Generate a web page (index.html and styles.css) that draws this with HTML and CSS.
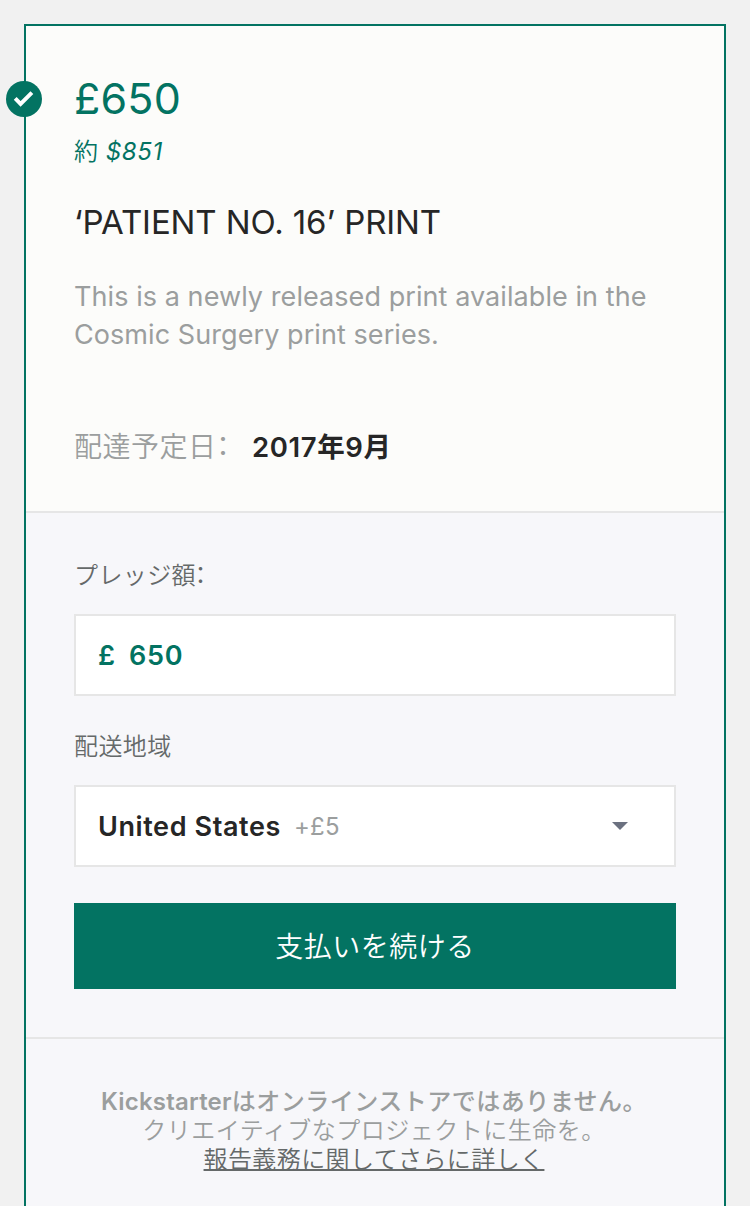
FILE: index.html
```html
<!DOCTYPE html>
<html lang="ja">
<head>
<meta charset="utf-8">
<title>Pledge</title>
<link rel="stylesheet" href="styles.css">
</head>
<body>
<main class="reward">
  <svg class="check" viewBox="0 0 36 36"><circle cx="18" cy="18" r="18"/><path d="M9.2 17.4l5.4 5.5L25.9 11.7"/></svg>
  <section class="summary">
    <h1 class="price">£650</h1>
    <p class="approx">約 <em>$851</em></p>
    <h2 class="title">‘PATIENT NO. 16’ PRINT</h2>
    <p class="description">This is a newly released print available in the<br>Cosmic Surgery print series.</p>
    <p class="delivery"><span class="label">配達予定<span class="tight">日：</span></span><strong>2017年9月</strong></p>
  </section>
  <form class="pledge">
    <label class="field-label">プレッジ<span class="tight">額：</span></label>
    <div class="field amount"><span class="currency">£</span><span class="value">650</span></div>
    <label class="field-label region">配送地域</label>
    <div class="field"><span class="country">United States</span><span class="shipping">+£5</span><svg class="caret" viewBox="0 0 16 8"><path d="M0 0h16L8 8z"/></svg></div>
    <button class="continue" type="button">支払いを続ける</button>
  </form>
  <footer class="note">
    <p class="lead"><span class="brand">Kickstarter</span>はオンラインストアではありません。</p>
    <p class="sub">クリエイティブなプロジェクトに生命を。</p>
    <a class="more">報告義務に関してさらに詳しく</a>
  </footer>
</main>
</body>
</html>
```
FILE: styles.css
```css
* { box-sizing: border-box; }
body { margin: 0; height: 1206px; overflow: hidden; background: #f1f1f1; padding: 24px 24px 0; font-family: Inter, "Noto Sans CJK JP", sans-serif; color: #262626; }
h1, h2, p { margin: 0; font-weight: 400; white-space: nowrap; }
.reward { position: relative; height: 1230px; border: 2px solid #037362; background: #f7f7fa; }
.check { position: absolute; left: -20px; top: 55px; width: 36px; height: 36px; }
.check circle { fill: #037362; }
.check path { fill: none; stroke: #fff; stroke-width: 4; }
.summary { height: 487px; padding: 45px 48px 0; background: #fcfcfa; border-bottom: 2px solid #e6e6e6; }
.price { font-size: 43px; line-height: 54px; letter-spacing: 0.2px; color: #037362; }
.approx { font-size: 24px; line-height: 36px; margin-top: 9px; color: #037362; font-weight: 350; }
.approx em { margin-left: 1px; font-weight: 400; letter-spacing: 0.7px; }
.title { font-size: 33px; line-height: 48px; margin-top: 28px; letter-spacing: -0.1px; }
.description { font-size: 27px; line-height: 38px; margin-top: 32px; color: #9b9e9e; letter-spacing: 0.07px; }
.delivery { display: flex; font-size: 28px; line-height: 40px; margin-top: 73px; }
.label { width: 178px; color: #9b9e9e; font-weight: 350; letter-spacing: 0.5px; }
.tight { letter-spacing: -7px; }
.delivery strong { font-weight: 600; font-size: 27.5px; letter-spacing: 0.6px; }
.pledge { height: 526px; padding: 45px 48px 0; border-bottom: 2px solid #e6e6e6; }
.field-label { display: block; height: 56px; font-size: 24px; line-height: 36px; color: #656969; font-weight: 350; letter-spacing: 0.4px; white-space: nowrap; }
.field { display: flex; align-items: center; width: 602px; height: 82px; padding: 0 46px 0 22px; background: #fff; border: 2px solid #e6e6e6; font-size: 27px; }
.amount { color: #037362; font-weight: 600; letter-spacing: 0.8px; }
.currency { width: 31px; }
.region { margin-top: 33px; }
.country { font-weight: 600; letter-spacing: 0.6px; }
.shipping { margin-left: 13px; font-size: 24px; letter-spacing: 0.2px; color: #9b9e9e; }
.caret { width: 16px; height: 8px; margin-left: auto; fill: #6b7180; }
.continue { display: block; width: 602px; height: 86px; margin-top: 36px; padding: 0 0 2px; border: 0; background: #037362; color: #fff; font: 350 28px/84px "Noto Sans CJK JP", sans-serif; letter-spacing: 0.5px; }
.note { padding: 48px 2px 0 0; text-align: center; font-size: 24px; line-height: 29px; letter-spacing: 0.4px; color: #9b9e9e; }
.lead { font-weight: 500; letter-spacing: 0.5px; }
.brand { font-weight: 600; letter-spacing: 0.2px; }
.sub { font-weight: 350; letter-spacing: 0.5px; }
.more { color: #656969; font-weight: 350; text-decoration: underline; text-decoration-thickness: 2px; text-decoration-skip-ink: none; text-underline-offset: 1px; }
```
